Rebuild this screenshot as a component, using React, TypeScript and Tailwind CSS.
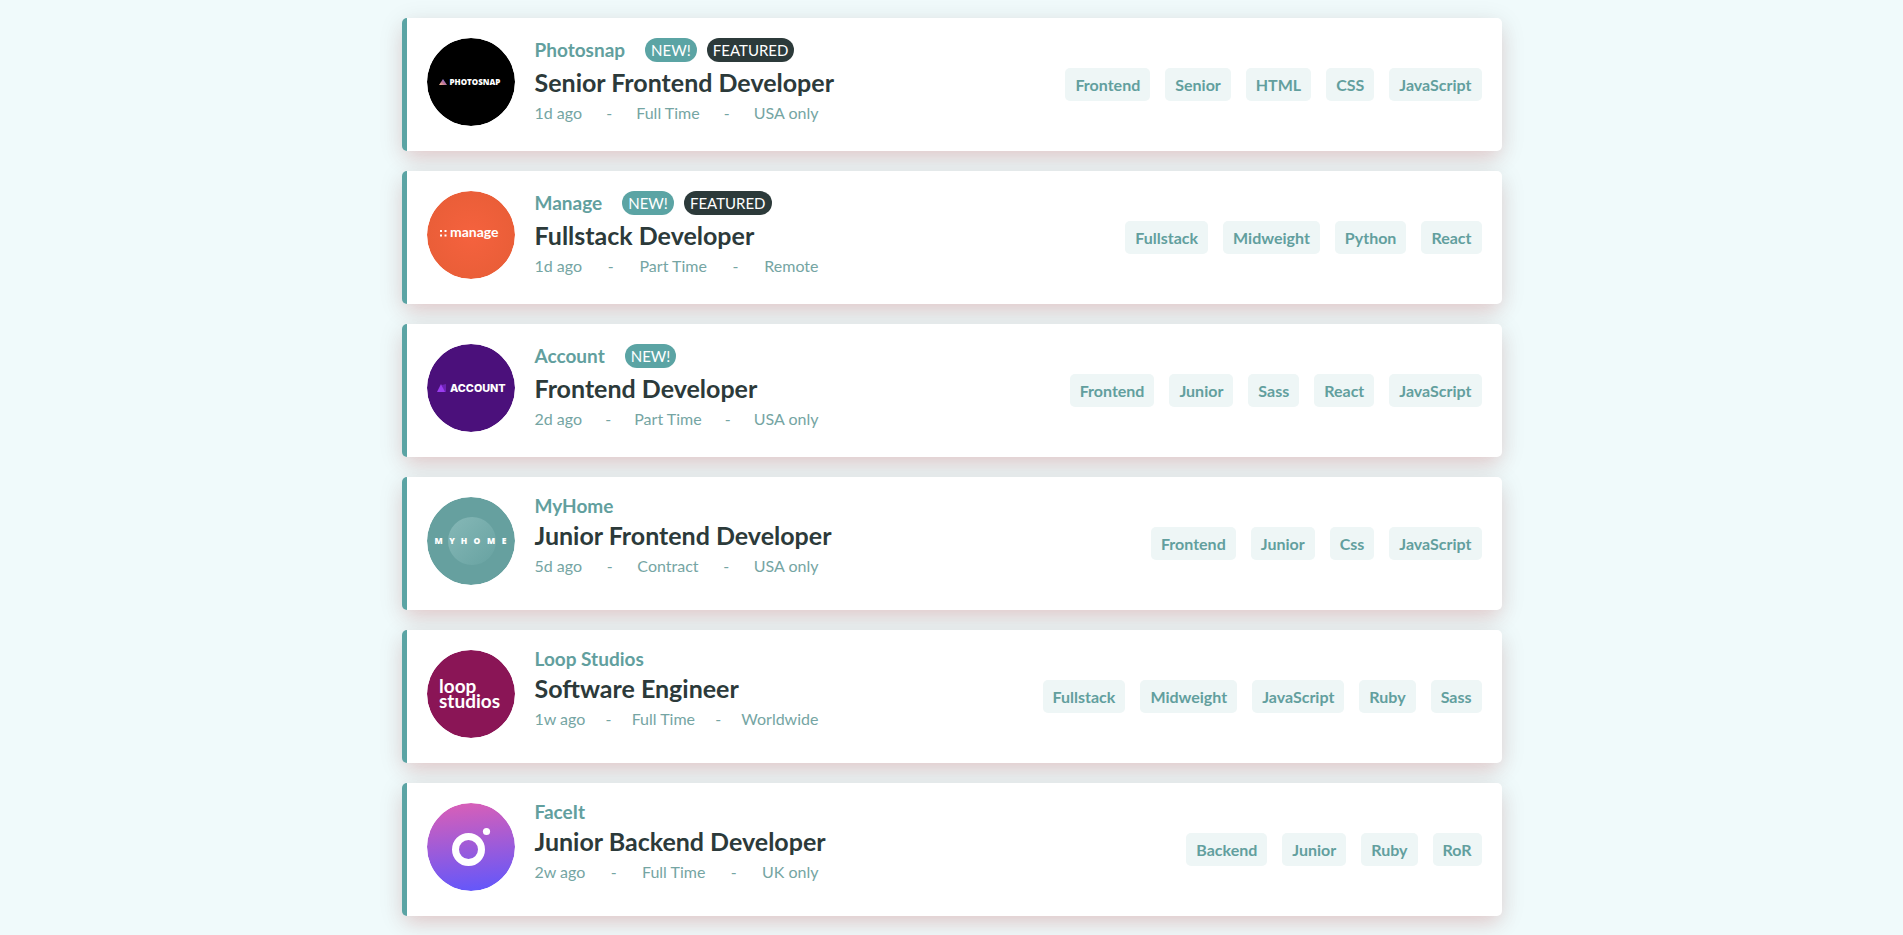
import type { ReactNode } from "react";

type Job = {
  company: string;
  logo: ReactNode;
  isNew?: boolean;
  featured?: boolean;
  title: string;
  posted: string;
  contract: string;
  location: string;
  tags: string[];
};

const logoClass = "h-22 w-22 shrink-0 rounded-full";

function PhotosnapLogo() {
  return (
    <svg viewBox="0 0 88 88" className={logoClass} role="img" aria-label="Photosnap logo">
      <defs>
        <linearGradient id="snap" x1="0" y1="1" x2="1" y2="0">
          <stop offset="0" stopColor="#ffc593" />
          <stop offset="0.45" stopColor="#bc7198" />
          <stop offset="1" stopColor="#5a77ff" />
        </linearGradient>
      </defs>
      <circle cx="44" cy="44" r="44" fill="#000" />
      <path d="M12 47 L16 41 L20 47 Z" fill="url(#snap)" />
      <text x="22.500" y="47" fontSize="8" fontWeight="800" fill="#fff" fontFamily="Open Sans, sans-serif">PHOTOSNAP</text>
    </svg>
  );
}

function ManageLogo() {
  return (
    <svg viewBox="0 0 88 88" className={logoClass} role="img" aria-label="Manage logo">
      <defs>
        <radialGradient id="manage">
          <stop offset="0" stopColor="#f5623e" />
          <stop offset="1" stopColor="#ea5e38" />
        </radialGradient>
      </defs>
      <circle cx="44" cy="44" r="44" fill="url(#manage)" />
      <g fill="#fff">
        <rect x="13" y="39" width="2" height="2" />
        <rect x="17.500" y="39" width="2" height="2" />
        <rect x="13" y="43.500" width="2" height="2" />
        <rect x="17.500" y="43.500" width="2" height="2" />
      </g>
      <text x="23" y="46" fontSize="14" fontWeight="700" fill="#fff" fontFamily="Lato, sans-serif">manage</text>
    </svg>
  );
}

function AccountLogo() {
  return (
    <svg viewBox="0 0 88 88" className={logoClass} role="img" aria-label="Account logo">
      <circle cx="44" cy="44" r="44" fill="#4b107b" />
      <path d="M15 41 L19 40 L19 48 L16 48 Z" fill="#6d22b4" />
      <path d="M10 48 L14 40 L18 48 Z" fill="#9a3df0" />
      <text x="23" y="48" fontSize="10.800" fontWeight="800" fill="#fff" fontFamily="Inter, sans-serif">ACCOUNT</text>
    </svg>
  );
}

function MyHomeLogo() {
  return (
    <svg viewBox="0 0 88 88" className={logoClass} role="img" aria-label="MyHome logo">
      <defs>
        <linearGradient id="home" x1="0" y1="0" x2="1" y2="1">
          <stop offset="0" stopColor="#86b8b7" />
          <stop offset="1" stopColor="#67a2a1" />
        </linearGradient>
      </defs>
      <circle cx="44" cy="44" r="44" fill="#66a09f" />
      <circle cx="45" cy="44" r="24" fill="url(#home)" />
      <g fontSize="8.500" fontWeight="800" fill="#fff" fontFamily="Open Sans, sans-serif" textAnchor="middle">
        <text x="11.500" y="47">M</text>
        <text x="25" y="47">Y</text>
        <text x="37" y="47">H</text>
        <text x="50" y="47">O</text>
        <text x="64" y="47">M</text>
        <text x="77" y="47">E</text>
      </g>
    </svg>
  );
}

function LoopStudiosLogo() {
  return (
    <svg viewBox="0 0 88 88" className={logoClass} role="img" aria-label="Loop Studios logo">
      <circle cx="44" cy="44" r="44" fill="#8a1556" />
      <text fontSize="19" fontWeight="700" fill="#fff" fontFamily="Lato, sans-serif">
        <tspan x="12" y="43">loop</tspan>
        <tspan x="12" y="58">studios</tspan>
      </text>
    </svg>
  );
}

function FaceItLogo() {
  return (
    <svg viewBox="0 0 88 88" className={logoClass} role="img" aria-label="FaceIt logo">
      <defs>
        <linearGradient id="face" x1="0.450" y1="0" x2="0.550" y2="1">
          <stop offset="0" stopColor="#d75fb8" />
          <stop offset="1" stopColor="#6457fa" />
        </linearGradient>
      </defs>
      <circle cx="44" cy="44" r="44" fill="url(#face)" />
      <circle cx="41.500" cy="46.500" r="13" fill="none" stroke="#fff" strokeWidth="7" />
      <circle cx="59.500" cy="28.500" r="3.600" fill="#fff" />
    </svg>
  );
}

const jobs: Job[] = [
  {
    company: "Photosnap",
    logo: <PhotosnapLogo />,
    isNew: true,
    featured: true,
    title: "Senior Frontend Developer",
    posted: "1d ago",
    contract: "Full Time",
    location: "USA only",
    tags: ["Frontend", "Senior", "HTML", "CSS", "JavaScript"],
  },
  {
    company: "Manage",
    logo: <ManageLogo />,
    isNew: true,
    featured: true,
    title: "Fullstack Developer",
    posted: "1d ago",
    contract: "Part Time",
    location: "Remote",
    tags: ["Fullstack", "Midweight", "Python", "React"],
  },
  {
    company: "Account",
    logo: <AccountLogo />,
    isNew: true,
    title: "Frontend Developer",
    posted: "2d ago",
    contract: "Part Time",
    location: "USA only",
    tags: ["Frontend", "Junior", "Sass", "React", "JavaScript"],
  },
  {
    company: "MyHome",
    logo: <MyHomeLogo />,
    title: "Junior Frontend Developer",
    posted: "5d ago",
    contract: "Contract",
    location: "USA only",
    tags: ["Frontend", "Junior", "Css", "JavaScript"],
  },
  {
    company: "Loop Studios",
    logo: <LoopStudiosLogo />,
    title: "Software Engineer",
    posted: "1w ago",
    contract: "Full Time",
    location: "Worldwide",
    tags: ["Fullstack", "Midweight", "JavaScript", "Ruby", "Sass"],
  },
  {
    company: "FaceIt",
    logo: <FaceItLogo />,
    title: "Junior Backend Developer",
    posted: "2w ago",
    contract: "Full Time",
    location: "UK only",
    tags: ["Backend", "Junior", "Ruby", "RoR"],
  },
];

function JobCard({ job }: { job: Job }) {
  return (
    <article className="flex min-h-[133px] items-center justify-between gap-5 rounded-[5px] border-l-[5px] border-[#5ba4a4] bg-white p-5 shadow-[0_10px_20px_-4px_rgba(255,80,80,0.18),0_5px_26px_rgba(0,0,0,0.11)]">
      <div className="flex gap-5 self-start">
        {job.logo}
        <div className="w-71">
          <div className="flex items-center">
            <h2 className="mr-5 text-[19px] leading-[18px] font-bold text-[#629f9e]">{job.company}</h2>
            {job.isNew && (
              <span className="mr-2.5 rounded-full bg-[#5ba4a4] px-1.5 text-[15px] leading-6 text-white">NEW!</span>
            )}
            {job.featured && (
              <span className="rounded-full bg-[#2c3a3a] px-1.5 text-[15px] leading-6 text-white">FEATURED</span>
            )}
          </div>
          <h3 className="mt-1 text-[25px] leading-8 font-bold whitespace-nowrap">
            <a href="#" className="text-[#2c3a3a]">{job.title}</a>
          </h3>
          <div className="mt-[3px] flex justify-between text-base leading-6 text-[#75a5a3]">
            <span>{job.posted}</span>
            <span>-</span>
            <span>{job.contract}</span>
            <span>-</span>
            <span>{job.location}</span>
          </div>
        </div>
      </div>
      <div className="flex flex-wrap justify-end gap-[15px]">
        {job.tags.map((tag) => (
          <button key={tag} type="button" className="rounded-[5px] bg-[#eef6f6] px-2.5 text-base leading-[33px] font-bold text-[#629f9e]">
            {tag}
          </button>
        ))}
      </div>
    </article>
  );
}

export default function App() {
  return (
    <main className="min-h-screen bg-[#f0fafb] px-4 pt-[18px] pb-4 font-[Lato,sans-serif]">
      <div className="mx-auto flex max-w-275 flex-col gap-5">
        {jobs.map((job) => (
          <JobCard key={job.company} job={job} />
        ))}
      </div>
    </main>
  );
}
